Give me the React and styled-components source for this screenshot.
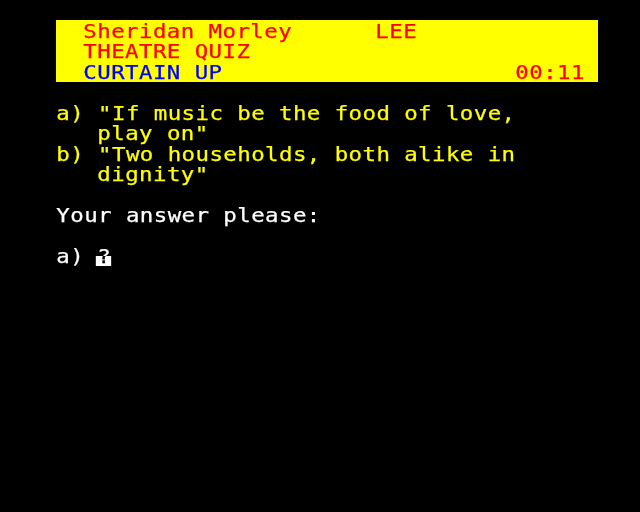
import React from 'react';
import styled, { createGlobalStyle } from 'styled-components';

const COL = 640 / 46;
const ROW = 512 / 25;
const SCALE = 1.18;

const GlobalStyle = createGlobalStyle`
  html, body {
    margin: 0;
    padding: 0;
    background: #000;
  }
`;

const Screen = styled.div`
  width: 640px;
  height: 512px;
  background: #000;
  overflow: hidden;
  padding: ${ROW}px 0 0 ${COL * 4}px;
  box-sizing: border-box;
  display: flex;
  flex-direction: column;
`;

const Banner = styled.div`
  width: ${COL * 39}px;
  background: #ffff00;
  margin-bottom: ${ROW}px;
`;

const Line = styled.div`
  display: grid;
  grid-template-columns: repeat(40, ${COL}px);
  height: ${ROW}px;
  line-height: ${ROW}px;
  font-family: 'DejaVu Sans Mono', monospace;
  font-size: 19px;
  letter-spacing: ${COL / SCALE - 19 * 0.602}px;
  white-space: pre;
`;

const Text = styled.span`
  grid-column-start: ${(p) => (p.$col || 0) + 1};
  color: ${(p) => p.$c || '#ffffff'};
  padding-left: 0.3px;
  padding-top: 0.5px;
  position: relative;
  transform: scaleX(${SCALE});
  transform-origin: left center;
  -webkit-text-stroke: 0.25px ${(p) => p.$c || '#ffffff'};
`;

// inverted block over the lower half of the character cell
const Cursor = styled.span`
  position: absolute;
  left: -1px;
  top: 10px;
  width: 12.5px;
  height: 10px;
  background: #fff;
  mix-blend-mode: difference;
`;

const RED = '#ff0000';
const BLUE = '#0000ff';
const YELLOW = '#ffff00';

export default function App() {
  return (
    <>
      <GlobalStyle />
      <Screen>
        <Banner>
          <Line>
            <Text $col={2} $c={RED}>Sheridan Morley</Text>
            <Text $col={23} $c={RED}>LEE</Text>
          </Line>
          <Line>
            <Text $col={2} $c={RED}>THEATRE QUIZ</Text>
          </Line>
          <Line>
            <Text $col={2} $c={BLUE}>CURTAIN UP</Text>
            <Text $col={33} $c={RED}>00:11</Text>
          </Line>
        </Banner>

        <Line>
          <Text $c={YELLOW}>a) "If music be the food of love,</Text>
        </Line>
        <Line>
          <Text $col={3} $c={YELLOW}>play on"</Text>
        </Line>
        <Line>
          <Text $c={YELLOW}>b) "Two households, both alike in</Text>
        </Line>
        <Line>
          <Text $col={3} $c={YELLOW}>dignity"</Text>
        </Line>
        <Line />
        <Line>
          <Text>Your answer please:</Text>
        </Line>
        <Line />
        <Line>
          <Text>a)</Text>
          <Text $col={3}>
            ?
            <Cursor />
          </Text>
        </Line>
      </Screen>
    </>
  );
}
